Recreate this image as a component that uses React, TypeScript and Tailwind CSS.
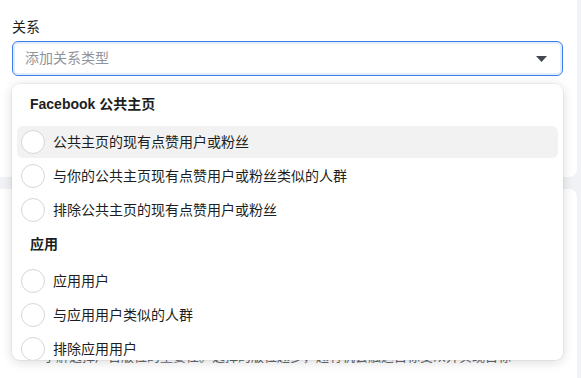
import { useState } from "react";

type Group = {
  title: string;
  items: string[];
};

const groups: Group[] = [
  {
    title: "Facebook 公共主页",
    items: ["公共主页的现有点赞用户或粉丝", "与你的公共主页现有点赞用户或粉丝类似的人群", "排除公共主页的现有点赞用户或粉丝"],
  },
  {
    title: "应用",
    items: ["应用用户", "与应用用户类似的人群", "排除应用用户"],
  },
];

function Option({ label, active }: { label: string; active: boolean }) {
  return (
    <div className={`mx-[5px] mt-[2px] flex h-[32px] items-center gap-[8px] rounded-[6px] pl-[4px] ${active ? "bg-[#f2f2f2]" : ""}`}>
      <span className="h-[24px] w-[24px] shrink-0 rounded-full border border-[#d3d6db] bg-white" />
      <span className="text-[14px] leading-[20px] text-[#1c1e21]">{label}</span>
    </div>
  );
}

export default function App() {
  const [hovered] = useState(groups[0].items[0]);

  return (
    <div className="min-h-[378px] bg-[#f0f2f5] font-['Liberation_Sans','Noto_Sans_CJK_SC',sans-serif]">
      <div className="h-[177px] w-[577px] rounded-br-[8px] bg-white px-[12px] pt-[17px]">
        <label className="block text-[14px] leading-[20px] text-[#1c1e21]">关系</label>
        <div className="relative z-10 mt-[4px] w-[551px]">
          <div className="flex h-[35px] items-center justify-between rounded-[6px] border border-[#3d7be6] pl-[12px] pr-[15px] shadow-[inset_0_0_0_2px_rgba(24,119,242,0.12)]">
            <span className="text-[14px] text-[#90949c]">添加关系类型</span>
            <svg width="11" height="6" viewBox="0 0 11 6">
              <path d="M0 0h11L5.5 6z" fill="#444950" />
            </svg>
          </div>

          <div className="absolute left-0 top-full mt-[8px] h-[276px] w-full overflow-hidden rounded-[8px] bg-white shadow-[0_2px_12px_rgba(0,0,0,0.15),0_0_0_1px_rgba(0,0,0,0.04)]">
            {groups.map((group, gi) => (
              <div key={group.title}>
                <div className={`flex items-center px-[18px] text-[14px] font-bold text-[#1c1e21] ${gi === 0 ? "h-[40px]" : "h-[37px]"}`}>
                  {group.title}
                </div>
                {group.items.map((item) => (
                  <Option key={item} label={item} active={item === hovered} />
                ))}
              </div>
            ))}
          </div>
        </div>
      </div>

      <div className="mt-[12px] h-[189px] w-[577px] rounded-tr-[8px] bg-white pl-[43px] pt-[159px]">
        <p className="text-[13px] leading-[18px] text-[#606770]">了解选择广告版位的重要性。选择的版位越多，越有机会触达目标受众并实现目标</p>
      </div>
    </div>
  );
}
